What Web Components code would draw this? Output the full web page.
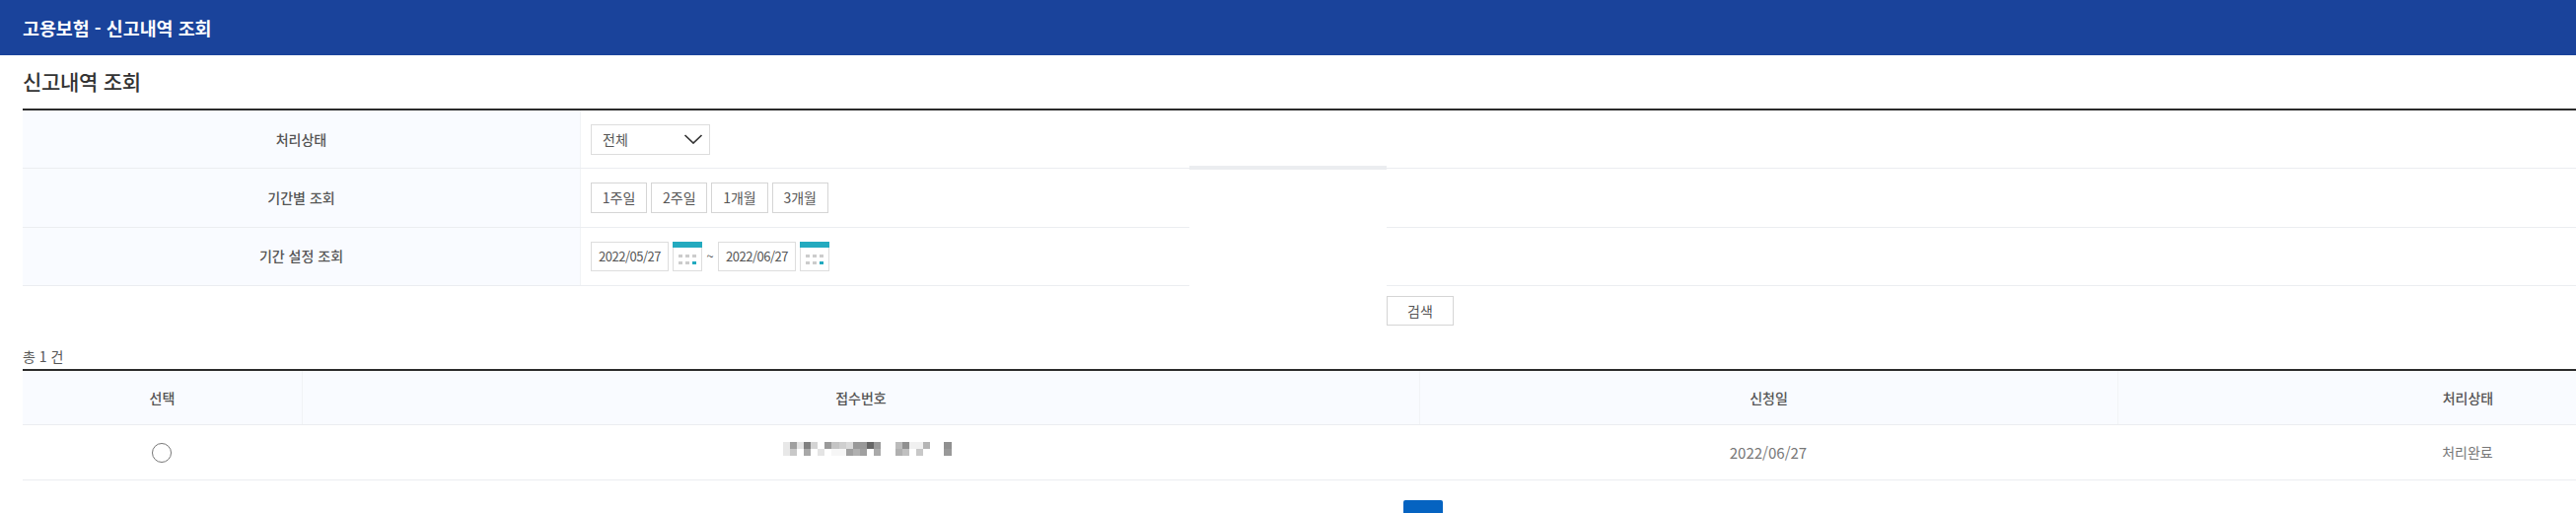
<!DOCTYPE html>
<html lang="ko">
<head>
<meta charset="utf-8">
<title>고용보험 - 신고내역 조회</title>
<style>
  html, body { margin: 0; height: 520px; overflow: hidden; background: #fff; }
  body { font-family: "Noto Sans CJK KR", "Noto Sans", sans-serif; color: #555; }
</style>
</head>
<body>
<report-page>
  <app-header>고용보험 - 신고내역 조회</app-header>
  <section-title>신고내역 조회</section-title>
  <search-form>
    <form-row label="처리상태"><select-box>전체</select-box></form-row>
    <form-row label="기간별 조회">
      <plain-btn>1주일</plain-btn><plain-btn>2주일</plain-btn><plain-btn>1개월</plain-btn><plain-btn>3개월</plain-btn>
    </form-row>
    <form-row label="기간 설정 조회">
      <date-field>2022/05/27</date-field><span style="width:8px;text-align:center;font-size:13px;line-height:1">~</span><date-field>2022/06/27</date-field>
    </form-row>
  </search-form>
  <search-bar><plain-btn wide>검색</plain-btn></search-bar>
  <result-count>총 1 건</result-count>
  <result-table></result-table>
  <pager-bar></pager-bar>
</report-page>

<script>
(function() {
  function define(name, css, html, extra) {
    class El extends HTMLElement {
      constructor() {
        super();
        this.attachShadow({ mode: 'open' }).innerHTML = '<style>' + css + '</style>' + html;
      }
      connectedCallback() {
        if (extra) extra.call(this);
      }
    }
    customElements.define(name, El);
  }

  define('report-page', `
    :host { display: block; width: 2880px; position: relative; height: 520px; overflow: hidden; }
    .patch { position: absolute; left: 1206px; top: 168px; width: 200px; height: 123px; background: #fff; }
    .patch i { display: block; height: 4px; background: #ebedf0; }
  `, `<slot></slot><div class="patch"><i></i></div>`);

  define('app-header', `
    :host { display: flex; align-items: center; height: 56px; padding-left: 23px; background: #1a439b; color: #fff;
      font-size: 18.4px; font-weight: 700; }
  `, `<slot></slot>`);

  define('section-title', `
    :host { display: flex; align-items: center; box-sizing: border-box; height: 54px; padding: 0 0 2px 23px; color: #333;
      font-size: 21px; font-weight: 500; letter-spacing: -0.3px; }
  `, `<slot></slot>`);

  define('search-form', `
    :host { display: block; margin: 0 23px; border-top: 2px solid #2b2b2b; }
  `, `<slot></slot>`);

  define('form-row', `
    :host { display: grid; grid-template-columns: 566px 1fr; height: 58.33px; border-bottom: 1px solid #ebedf0; font-size: 14px; }
    .label { display: flex; align-items: center; justify-content: center; padding-bottom: 1px; background: #f9fbff; border-right: 1px solid #f1f3f6;
      color: #555; font-weight: 500; }
    .value { display: flex; align-items: center; gap: 4px; padding-left: 10px; }
  `, `<div class="label"></div><div class="value"><slot></slot></div>`, function() {
    this.shadowRoot.querySelector('.label').textContent = this.getAttribute('label');
  });

  define('select-box', `
    :host { display: flex; align-items: center; justify-content: space-between; box-sizing: border-box; width: 121px; height: 31px;
      padding: 0 6px 0 11px; border: 1px solid #ddd; font-size: 14px; color: #555; }
    svg { display: block; }
  `, `<slot></slot><svg width="20" height="10" viewBox="0 0 20 10"><path d="M1.5 1 L10 9 L18.5 1" fill="none" stroke="#333" stroke-width="1.7"/></svg>`);

  define('plain-btn', `
    :host { display: flex; align-items: center; justify-content: center; box-sizing: border-box; width: 57.2px; height: 31px;
      border: 1px solid #d5d5d5; background: #fff; font-size: 14px; color: #555; }
    :host([wide]) { width: 68px; height: 30px; }
  `, `<slot></slot>`);

  define('date-field', `
    :host { display: flex; align-items: center; gap: 4px; }
    .box { display: flex; align-items: center; justify-content: center; box-sizing: border-box; width: 79px; height: 30px;
      border: 1px solid #ddd; font-size: 13px; letter-spacing: -0.5px; color: #555; }
    svg { display: block; margin-top: 1px; }
  `, `<div class="box"><slot></slot></div>
    <svg width="30" height="30" viewBox="0 0 30 30">
      <rect x=".5" y=".5" width="29" height="29" fill="#fff" stroke="#ddd"/>
      <rect width="30" height="6" fill="#23aabf"/>
      <g fill="#ccc">
        <rect x="6" y="13" width="4" height="3"/><rect x="13" y="13" width="4" height="3"/><rect x="20" y="13" width="4" height="3"/>
        <rect x="6" y="20" width="4" height="3"/><rect x="13" y="20" width="4" height="3"/>
      </g>
      <rect x="20" y="20" width="4" height="3" fill="#23aabf"/>
    </svg>`);

  define('search-bar', `
    :host { display: flex; justify-content: center; padding-top: 10px; }
  `, `<slot></slot>`);

  define('result-count', `
    :host { display: flex; align-items: center; height: 26px; padding: 18px 0 0 23px; font-size: 14px; color: #555; }
  `, `<slot></slot>`);

  define('result-table', `
    :host { display: block; margin: 0 23px; border-top: 2px solid #2b2b2b; }
    .row { display: grid; grid-template-columns: 283px 1133px 708px 710px; border-bottom: 1px solid #ebedf0; font-size: 14px; }
    .row > div { display: flex; align-items: center; justify-content: center; }
    .head { height: 54px; background: #f9fbff; color: #555; font-weight: 500; }
    .head > div + div { border-left: 1px solid #f1f3f6; }
    .body { height: 55px; color: #777; }
    .date { font-size: 15px; }
    .radio { box-sizing: border-box; width: 20px; height: 20px; margin: 2px 2px 0 0; border: 1px solid #777; border-radius: 50%; }
    .mosaic { display: grid; grid-template-columns: repeat(24, 7.125px); grid-auto-rows: 7px; margin: 0 0 6px 13px; }
  `, `<div class="row head"><div>선택</div><div>접수번호</div><div>신청일</div><div>처리상태</div></div>
    <div class="row body"><div><span class="radio"></span></div><div><span class="mosaic"></span></div><div class="date">2022/06/27</div><div>처리완료</div></div>`,
  function() {
    // masked receipt number, two rows of grey cells
    const cells = [
      'e8e8e8','a0a0a0','e4e4e4','808080','d4d4d4','fff','9a9a9a','c4c4c4','cfcfcf','dadada','999','999','666','999','fff','fff','bbb','909090','f0f0f0','f0f0f0','b5b5b5','fff','fff','909090',
      'e8e8e8','c8c8c8','fff','a8a8a8','fff','e4e4e4','fff','f6f6f6','f6f6f6','a0a0a0','b0b0b0','a0a0a0','fff','aaa','fff','fff','b0b0b0','c0c0c0','fff','c8c8c8','fff','fff','fff','999'
    ];
    this.shadowRoot.querySelector('.mosaic').innerHTML = cells.map(c => `<i style="background:#${c}"></i>`).join('');
  });

  define('pager-bar', `
    :host { display: flex; justify-content: center; padding-top: 20px; padding-left: 6px; }
    .cur { width: 40px; height: 40px; border-radius: 2px; background: #0563c1; }
  `, `<div class="cur"></div>`);
})();
</script>
</body>
</html>
